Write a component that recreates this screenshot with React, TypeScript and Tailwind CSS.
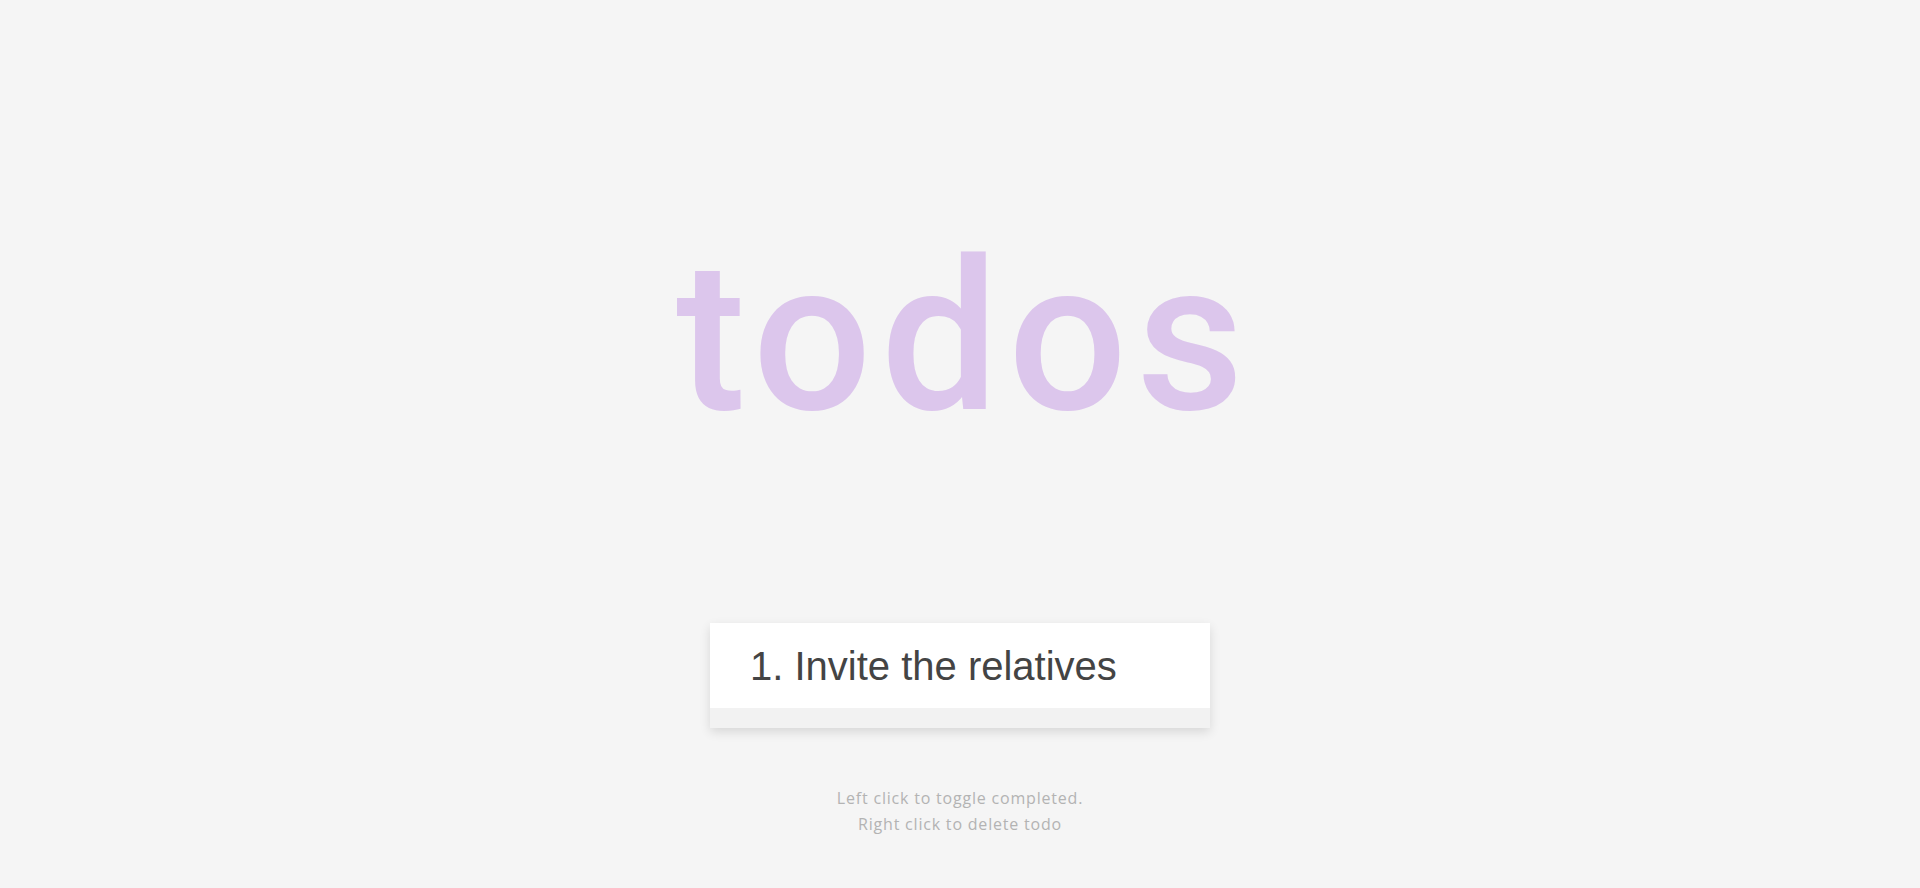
export default function App() {
  return (
    <div className="min-h-screen bg-[#f5f5f5] flex flex-col items-center">
      <h1 className="mt-[232px] pl-[9px] text-[210px] leading-none font-medium text-[#dcc6ec] tracking-[9px] font-['Roboto',sans-serif]">
        todos
      </h1>

      {/* todo list card */}
      <div className="mt-[181px] w-[500px] bg-white shadow-[0_4px_10px_rgba(0,0,0,0.12)]">
        <ul>
          <li className="px-10 h-[85px] flex items-center text-[40px] text-[#444] font-['Liberation_Sans',Arial,sans-serif] cursor-pointer">
            1. Invite the relatives
          </li>
        </ul>
        <div className="h-5 bg-[#f2f2f2]" />
      </div>

      <p className="mt-[57px] text-center text-[16px] leading-[26px] tracking-[0.8px] text-[#b3b3b3] font-['Open_Sans',sans-serif]">
        Left click to toggle completed.
        <br />
        Right click to delete todo
      </p>
    </div>
  );
}
